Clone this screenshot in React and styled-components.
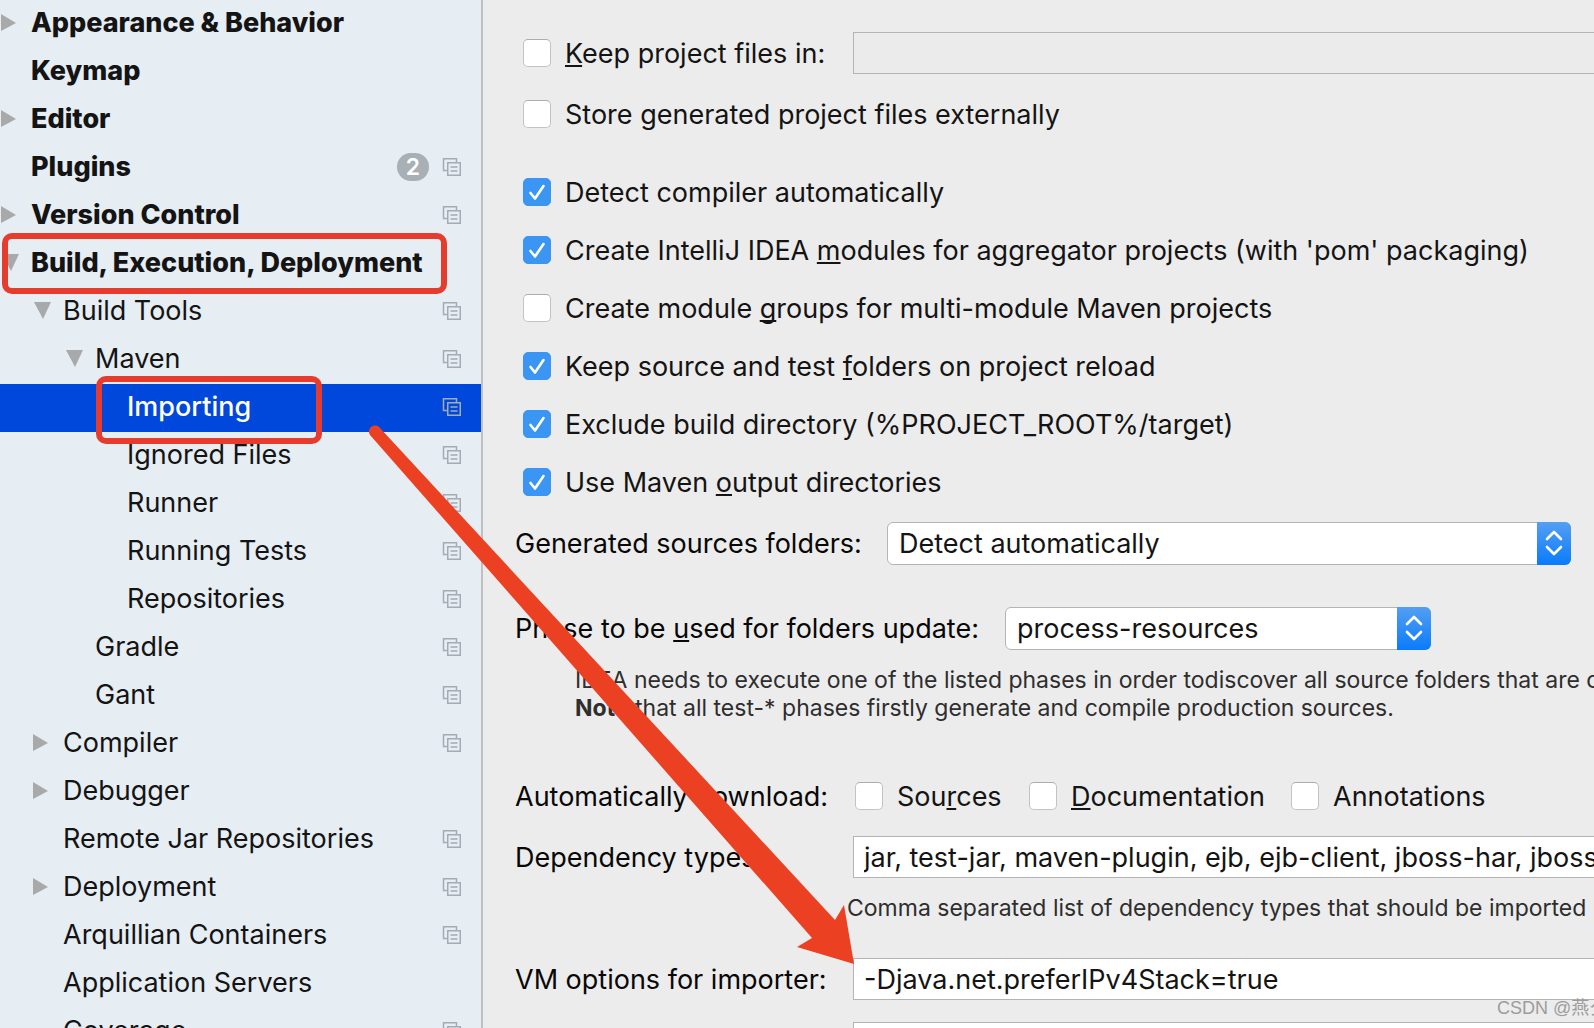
import styled, { createGlobalStyle, css } from "styled-components"

const GlobalStyle = createGlobalStyle`
    * {
        box-sizing: border-box;
    }
    body {
        margin: 0;
        overflow: hidden;
        background-color: #ECECEC;
        font-family: "Inter", "Noto Sans CJK SC", sans-serif;
        font-size: 27px;
        color: #141414;
    }
    input, select, button {
        font: inherit;
        color: inherit;
    }
`
const StyledPage = styled.div`
    position: relative;
    display: flex;
    height: 100vh;
    overflow: hidden;
`
const StyledSidebar = styled.nav`
    flex: 0 0 483px;
    border-right: 2px solid #BFC0C2;
    background-color: #E6EDF3;
    overflow: hidden;
`
const StyledTree = styled.ul`
    list-style: none;
    margin: 0;
    padding: 0;
`
const StyledTreeItem = styled.li`
    position: relative;
    display: flex;
    align-items: center;
    gap: 13px;
    height: 48px;
    padding-right: 19px;
    padding-bottom: 2px;
    padding-left: ${({ $level }) => $level * 32}px;
    font-weight: ${({ $level }) => ($level === 0 ? 800 : 400)};
    ${({ $selected }) => $selected && css`
        background-color: #0048DB;
        color: #FFFFFF;
        font-weight: 500;
    `}
`
const StyledTreeButton = styled.button`
    flex: 1;
    display: flex;
    align-items: center;
    height: 46px;
    padding: 0 0 2px;
    border: none;
    background: none;
    text-align: left;
    white-space: nowrap;
`
const StyledArrowSlot = styled.span`
    display: flex;
    flex: 0 0 31px;
`
const StyledBadge = styled.span`
    width: 32px;
    height: 28px;
    border-radius: 14px;
    background-color: #A9B0B5;
    color: #FFFFFF;
    font-size: 23px;
    font-weight: 600;
    line-height: 28px;
    text-align: center;
`
const StyledHighlight = styled.span`
    position: absolute;
    top: ${({ $top }) => $top}px;
    left: ${({ $left }) => $left}px;
    width: ${({ $width }) => $width}px;
    height: ${({ $height }) => $height}px;
    border: 6px solid #E63C2E;
    border-radius: 10px;
    pointer-events: none;
    z-index: 1;
`
const StyledForm = styled.form`
    flex: 1;
    min-width: 0;
    display: flex;
    flex-direction: column;
    padding: 24px 0 0 32px;
    white-space: nowrap;
`
const StyledGroup = styled.div`
    display: flex;
    flex-direction: column;
    gap: ${({ $gap }) => $gap || 0}px;
    margin-bottom: ${({ $after }) => $after || 0}px;
`
const StyledRow = styled.div`
    display: flex;
    align-items: center;
    height: 58px;
    padding-left: ${({ $inset }) => ($inset ? 8 : 0)}px;
`
const StyledLabel = styled.label`
    flex: 0 0 ${({ $width }) => ($width ? `${$width}px` : "auto")};
    color: #080808;
`
const StyledCheckLabel = styled.label`
    display: flex;
    align-items: center;
    gap: 14px;
    flex: 0 0 ${({ $width }) => ($width ? `${$width}px` : "auto")};
`
const StyledCheckbox = styled.input`
    appearance: none;
    flex: none;
    width: 28px;
    height: 28px;
    margin: 0;
    border: 1px solid #C3C3C3;
    border-top-color: #ADADAD;
    border-radius: 5px;
    background: #FFFFFF;

    &:checked {
        border-color: #3B95F3;
        background: #3B95F3;
    }
`
const StyledCheckBox = styled.span`
    position: relative;
    display: flex;

    svg {
        position: absolute;
        inset: 0;
        pointer-events: none;
    }
`
const StyledInput = styled.input`
    flex: 1;
    min-width: 0;
    height: 42px;
    padding: 0 0 0 10px;
    border: 1px solid #B4B4B4;
    border-right: none;
    border-radius: 0;
    background-color: #FFFFFF;

    &:disabled {
        background-color: #EBEBEB;
    }
`
const StyledSelectBox = styled.span`
    position: relative;
    display: flex;
    flex: ${({ $width }) => ($width ? `0 0 ${$width}px` : "1")};
    margin-right: 23px;
`
const StyledSelect = styled.select`
    appearance: none;
    width: 100%;
    height: 43px;
    padding: 0 44px 0 11px;
    border: 1px solid #B4B4B4;
    border-radius: 6px;
    background-color: #FFFFFF;
`
const StyledStepper = styled.span`
    position: absolute;
    top: 0;
    right: 0;
    bottom: 0;
    display: flex;
    align-items: center;
    justify-content: center;
    width: 34px;
    border-radius: 0 6px 6px 0;
    background: linear-gradient(#549FF2, #0A7BFB);
    pointer-events: none;
`
const StyledHint = styled.p`
    margin: 0;
    padding-left: ${({ $indent }) => $indent}px;
    color: #2E2E2E;
    font-size: 23px;
    line-height: 28px;
`
const StyledAccel = styled.u`
    text-decoration-thickness: 2px;
    text-underline-offset: 2px;
    text-decoration-skip-ink: none;
`
const StyledPointer = styled.svg`
    position: absolute;
    top: 420px;
    left: 360px;
    pointer-events: none;
    z-index: 2;
`
const StyledWatermark = styled.span`
    position: absolute;
    top: 996px;
    left: 1497px;
    color: #9C9C9C;
    font-family: "Liberation Sans", "Noto Sans CJK SC", sans-serif;
    font-size: 18px;
    line-height: 24px;
    white-space: nowrap;
`

const items = [
    { name: "Appearance & Behavior", level: 0, arrow: "right" },
    { name: "Keymap", level: 0 },
    { name: "Editor", level: 0, arrow: "right" },
    { name: "Plugins", level: 0, badge: 2, project: true },
    { name: "Version Control", level: 0, arrow: "right", project: true },
    { name: "Build, Execution, Deployment", level: 0, arrow: "down", highlight: { $top: -7, $left: 2, $width: 445, $height: 61 } },
    { name: "Build Tools", level: 1, arrow: "down", project: true },
    { name: "Maven", level: 2, arrow: "down", project: true },
    { name: "Importing", level: 3, project: true, selected: true, highlight: { $top: -8, $left: 96, $width: 226, $height: 68 } },
    { name: "Ignored Files", level: 3, project: true },
    { name: "Runner", level: 3, project: true },
    { name: "Running Tests", level: 3, project: true },
    { name: "Repositories", level: 3, project: true },
    { name: "Gradle", level: 2, project: true },
    { name: "Gant", level: 2, project: true },
    { name: "Compiler", level: 1, arrow: "right", project: true },
    { name: "Debugger", level: 1, arrow: "right" },
    { name: "Remote Jar Repositories", level: 1, project: true },
    { name: "Deployment", level: 1, arrow: "right", project: true },
    { name: "Arquillian Containers", level: 1, project: true },
    { name: "Application Servers", level: 1 },
    { name: "Coverage", level: 1, project: true },
]

const TreeArrow = ({ direction }) => (
    <svg width="20" height="20" viewBox="0 0 20 20" fill="#A8A9AA" aria-hidden="true">
        {direction === "right" ? <path d="M1 2v17l15-8z" /> : <path d="M2 2h17l-8 17z" />}
    </svg>
)

const ProjectIcon = () => (
    <svg width="20" height="20" viewBox="0 0 20 20" fill="none" stroke="#A3ACB3" strokeWidth="1.5" aria-hidden="true">
        <path d="M5 13.5H1.5V1.75H14.5V5" />
        <path d="M5.75 5.75h12.5v12.5H5.75zM8.5 10h7M8.5 14h7" />
    </svg>
)

const TreeItem = ({ item }) => (
    <StyledTreeItem $level={item.level} $selected={item.selected}>
        <StyledTreeButton type="button">
            <StyledArrowSlot>{item.arrow && <TreeArrow direction={item.arrow} />}</StyledArrowSlot>
            {item.name}
        </StyledTreeButton>
        {item.badge && <StyledBadge>{item.badge}</StyledBadge>}
        {item.project && <ProjectIcon />}
        {item.highlight && <StyledHighlight {...item.highlight} />}
    </StyledTreeItem>
)

const Checkbox = ({ children, checked, width }) => (
    <StyledCheckLabel $width={width}>
        <StyledCheckBox>
            <StyledCheckbox type="checkbox" defaultChecked={checked} />
            {checked && (
                <svg width="28" height="28" viewBox="0 0 28 28" fill="none" stroke="#FFFFFF" strokeWidth="2.6" strokeLinecap="round" strokeLinejoin="round">
                    <path d="M7.5 15l4.5 5.5L20.5 8" />
                </svg>
            )}
        </StyledCheckBox>
        <span>{children}</span>
    </StyledCheckLabel>
)

const Select = ({ id, value, width }) => (
    <StyledSelectBox $width={width}>
        <StyledSelect id={id} defaultValue={value}>
            <option>{value}</option>
        </StyledSelect>
        <StyledStepper>
            <svg width="20" height="28" viewBox="0 0 20 28" fill="none" stroke="#FFFFFF" strokeWidth="2.6" strokeLinecap="round" strokeLinejoin="round">
                <path d="M3 10l7-7 7 7M3 18l7 7 7-7" />
            </svg>
        </StyledStepper>
    </StyledSelectBox>
)

const App = () => {
    return (
        <StyledPage>
            <GlobalStyle />
            <StyledSidebar>
                <StyledTree>
                    {items.map((item) => <TreeItem key={item.name} item={item} />)}
                </StyledTree>
            </StyledSidebar>
            <StyledForm>
                <StyledGroup $gap={3} $after={20}>
                    <StyledRow $inset>
                        <Checkbox width={330}><StyledAccel>K</StyledAccel>eep project files in:</Checkbox>
                        <StyledInput type="text" aria-label="Project files directory" disabled />
                    </StyledRow>
                    <StyledRow $inset>
                        <Checkbox>Store generated project files externally</Checkbox>
                    </StyledRow>
                </StyledGroup>
                <StyledGroup $after={3}>
                    <StyledRow $inset><Checkbox checked>Detect compiler automatically</Checkbox></StyledRow>
                    <StyledRow $inset>
                        <Checkbox checked>Create IntelliJ IDEA <StyledAccel>m</StyledAccel>odules for aggregator projects (with 'pom' packaging)</Checkbox>
                    </StyledRow>
                    <StyledRow $inset>
                        <Checkbox>Create module <StyledAccel>g</StyledAccel>roups for multi-module Maven projects</Checkbox>
                    </StyledRow>
                    <StyledRow $inset>
                        <Checkbox checked>Keep source and test <StyledAccel>f</StyledAccel>olders on project reload</Checkbox>
                    </StyledRow>
                    <StyledRow $inset><Checkbox checked>Exclude build directory (%PROJECT_ROOT%/target)</Checkbox></StyledRow>
                    <StyledRow $inset>
                        <Checkbox checked>Use Maven <StyledAccel>o</StyledAccel>utput directories</Checkbox>
                    </StyledRow>
                </StyledGroup>
                <StyledGroup $gap={27} $after={9}>
                    <StyledRow>
                        <StyledLabel htmlFor="sources" $width={372}>Generated sources folders:</StyledLabel>
                        <Select id="sources" value="Detect automatically" />
                    </StyledRow>
                    <StyledRow>
                        <StyledLabel htmlFor="phase" $width={490}>Phase to be <StyledAccel>u</StyledAccel>sed for folders update:</StyledLabel>
                        <Select id="phase" value="process-resources" width={426} />
                    </StyledRow>
                </StyledGroup>
                <StyledGroup $after={45}>
                    <StyledHint $indent={60}>IDEA needs to execute one of the listed phases in order todiscover all source folders that are c</StyledHint>
                    <StyledHint $indent={60}><b>Note</b> that all test-* phases firstly generate and compile production sources.</StyledHint>
                </StyledGroup>
                <StyledGroup $gap={3} $after={8}>
                    <StyledRow>
                        <StyledLabel as="span" $width={340}>Automatically download:</StyledLabel>
                        <Checkbox width={174}>Sou<StyledAccel>r</StyledAccel>ces</Checkbox>
                        <Checkbox width={262}><StyledAccel>D</StyledAccel>ocumentation</Checkbox>
                        <Checkbox>Annotations</Checkbox>
                    </StyledRow>
                    <StyledRow>
                        <StyledLabel htmlFor="types" $width={338}>Dependency types:</StyledLabel>
                        <StyledInput id="types" type="text" defaultValue="jar, test-jar, maven-plugin, ejb, ejb-client, jboss-har, jboss-sar, war, ear, bundle" />
                    </StyledRow>
                </StyledGroup>
                <StyledGroup $after={28}>
                    <StyledHint $indent={332}>Comma separated list of dependency types that should be imported</StyledHint>
                </StyledGroup>
                <StyledGroup $gap={6}>
                    <StyledRow>
                        <StyledLabel htmlFor="vm" $width={338}>VM options for importer:</StyledLabel>
                        <StyledInput id="vm" type="text" defaultValue="-Djava.net.preferIPv4Stack=true" />
                    </StyledRow>
                    <StyledRow>
                        <StyledLabel htmlFor="jdk" $width={338} />
                        <StyledInput id="jdk" type="text" />
                    </StyledRow>
                </StyledGroup>
            </StyledForm>
            <StyledPointer width="500" height="550" viewBox="360 420 500 550" fill="#EC4023" aria-hidden="true">
                <path d="M380 428a6 6 0 0 0-10 7L812 938l-15 9 57 17-10-59-9 15z" />
            </StyledPointer>
            <StyledWatermark>CSDN @燕夕</StyledWatermark>
        </StyledPage>
    )
}

export default App
